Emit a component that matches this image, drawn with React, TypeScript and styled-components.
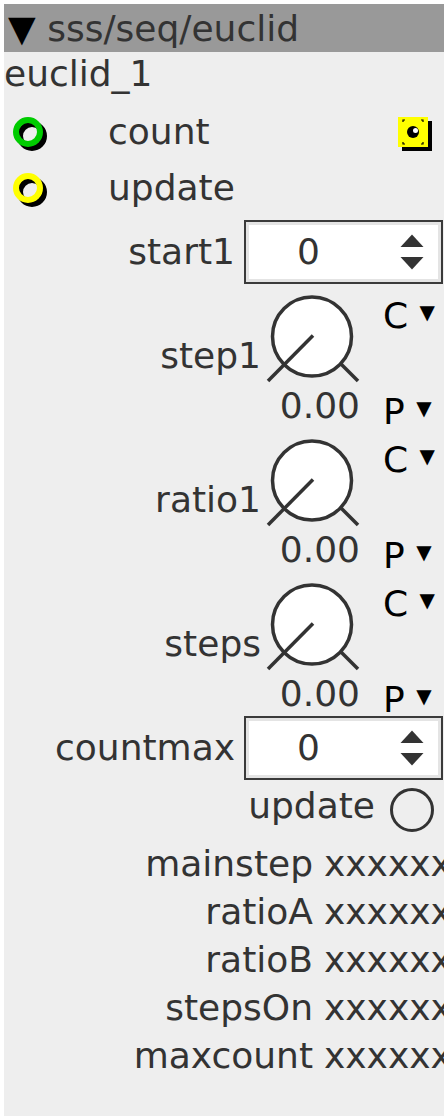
import React from "react";
import styled, { createGlobalStyle } from "styled-components";

const Global = createGlobalStyle`
  html, body { margin: 0; padding: 0; background: #ffffff; }
  body { font-family: "DejaVu Sans", "Noto Sans", sans-serif; }
`;

const Panel = styled.div`
  margin: 4px;
  width: 440px;
  height: 1112px;
  background: #eeeeee;
  overflow: hidden;
  font-family: "DejaVu Sans", "Noto Sans", sans-serif;
  font-size: 36px;
  color: #333333;
  display: flex;
  flex-direction: column;
  white-space: nowrap;
`;

const Header = styled.div`
  flex: 0 0 48px;
  background: #999999;
  display: flex;
  align-items: center;
  padding-left: 4px;
  line-height: 45px;
`;

const Caret = styled.span`
  color: #000000;
`;

const NameRow = styled.div`
  flex: 0 0 52px;
  line-height: 44px;
`;

const PortRow = styled.div`
  flex: 0 0 56px;
  display: flex;
  align-items: center;
`;

const PortLabel = styled.span`
  flex: 1;
  margin-left: 56px;
  line-height: 48px;
`;

const RingSvg = styled.svg`
  width: 40px;
  height: 40px;
  margin-left: 8px;
  flex-shrink: 0;
`;

const OutletSvg = styled.svg`
  width: 36px;
  height: 40px;
  margin-right: 10px;
  flex-shrink: 0;
`;

const FieldRow = styled.div<{ $top: number }>`
  flex: 0 0 ${(p) => 64 + p.$top}px;
  padding-top: ${(p) => p.$top}px;
  box-sizing: border-box;
  display: flex;
  align-items: center;
`;

const FieldLabel = styled.div`
  width: 231px;
  text-align: right;
  line-height: 48px;
  flex-shrink: 0;
`;

const SpinBox = styled.div`
  margin-left: 9px;
  width: 199px;
  height: 64px;
  box-sizing: border-box;
  border: 2px solid #3a3a3a;
  background: #ffffff;
  box-shadow: inset 0 0 0 3px #e4e4e4;
  display: flex;
  align-items: center;
  flex-shrink: 0;
`;

const SpinValue = styled.div`
  width: 125px;
  text-align: center;
  line-height: 48px;
`;

const SpinArrows = styled.svg`
  width: 24px;
  height: 36px;
  margin-left: 29px;
`;

const KnobBlock = styled.div`
  flex: 0 0 144px;
  display: grid;
  grid-template-columns: 258px 100px 1fr;
  grid-template-rows: 96px 48px;
`;

const KnobLabel = styled.div`
  grid-column: 1;
  grid-row: 1;
  align-self: end;
  text-align: right;
  line-height: 48px;
  padding-right: 1px;
`;

const KnobSvg = styled.svg`
  grid-column: 2;
  grid-row: 1;
  width: 100px;
  height: 96px;
  overflow: visible;
`;

const KnobValue = styled.div`
  grid-column: 2;
  grid-row: 2;
  text-align: right;
  line-height: 48px;
  padding-top: 2px;
  padding-right: 2px;
`;

const SideCol = styled.div`
  grid-column: 3;
  grid-row: 1 / span 2;
  display: flex;
  flex-direction: column;
  justify-content: space-between;
  padding-top: 8px;
  padding-left: 21px;
  color: #000000;
`;

const SideItem = styled.div`
  line-height: 40px;
  height: 40px;
`;

const SmallCaret = styled.span`
  font-size: 20px;
  vertical-align: 9px;
`;

const ToggleRow = styled.div`
  flex: 0 0 60px;
  display: flex;
  align-items: center;
  justify-content: flex-end;
  padding-right: 9px;
  gap: 14px;
`;

const ToggleLabel = styled.span`
  line-height: 48px;
  margin-bottom: 9px;
`;

const ToggleSvg = styled.svg`
  width: 46px;
  height: 46px;
  flex-shrink: 0;
`;

const ValueRow = styled.div`
  flex: 0 0 48px;
  display: grid;
  grid-template-columns: 309px 1fr;
  column-gap: 11px;
  line-height: 48px;
`;

const ValueLabel = styled.div`
  text-align: right;
`;

const ValueText = styled.div`
  overflow: visible;
`;

function Ring({ color }: { color: string }) {
  return (
    <RingSvg viewBox="0 0 40 40">
      <circle cx="20" cy="24" r="12" fill="none" stroke="#000" strokeWidth="6" />
      <circle cx="16" cy="20" r="12" fill="none" stroke={color} strokeWidth="6" />
    </RingSvg>
  );
}

function Outlet() {
  return (
    <OutletSvg viewBox="0 0 36 40">
      <rect x="4" y="9" width="30" height="30" fill="#000" />
      <rect x="0" y="5" width="30" height="30" fill="#ffff00" />
      <g stroke="#000" strokeWidth="1.2" fill="none">
        <path d="M5 10 V8 H7" />
        <path d="M23 8 H25 V10" />
        <path d="M5 30 V32 H7" />
        <path d="M23 32 H25 V30" />
      </g>
      <circle cx="15" cy="20" r="6" fill="#000" />
      <circle cx="17.5" cy="18.5" r="2.5" fill="#fff" />
    </OutletSvg>
  );
}

function Spin({ label, value, top }: { label: string; value: string; top: number }) {
  return (
    <FieldRow $top={top}>
      <FieldLabel>{label}</FieldLabel>
      <SpinBox>
        <SpinValue>{value}</SpinValue>
        <SpinArrows viewBox="0 0 24 36">
          <polygon points="0.5,13 12,0.5 23.5,13" fill="#333" />
          <polygon points="0.5,23 23.5,23 12,35.5" fill="#333" />
        </SpinArrows>
      </SpinBox>
    </FieldRow>
  );
}

function Knob({ label }: { label: string }) {
  return (
    <KnobBlock>
      <KnobLabel>{label}</KnobLabel>
      <KnobSvg viewBox="0 0 100 96">
        <circle cx="50" cy="52.5" r="39.5" fill="#fff" stroke="#333" strokeWidth="3.5" />
        <line x1="51" y1="51.5" x2="6" y2="97" stroke="#333" strokeWidth="3.5" />
        <line x1="78" y1="79" x2="96" y2="97" stroke="#333" strokeWidth="3.5" />
      </KnobSvg>
      <KnobValue>0.00</KnobValue>
      <SideCol>
        <SideItem>
          C <SmallCaret>▼</SmallCaret>
        </SideItem>
        <SideItem>
          P <SmallCaret>▼</SmallCaret>
        </SideItem>
      </SideCol>
    </KnobBlock>
  );
}

const values = ["mainstep", "ratioA", "ratioB", "stepsOn", "maxcount"];

export default function App() {
  return (
    <>
      <Global />
      <Panel>
        <Header>
          <Caret>▼</Caret>&nbsp;sss/seq/euclid
        </Header>
        <NameRow>euclid_1</NameRow>
        <PortRow>
          <Ring color="#00cc00" />
          <PortLabel>count</PortLabel>
          <Outlet />
        </PortRow>
        <PortRow>
          <Ring color="#ffff00" />
          <PortLabel>update</PortLabel>
        </PortRow>
        <Spin label="start1" value="0" top={4} />
        <Knob label="step1" />
        <Knob label="ratio1" />
        <Knob label="steps" />
        <Spin label="countmax" value="0" top={0} />
        <ToggleRow>
          <ToggleLabel>update</ToggleLabel>
          <ToggleSvg viewBox="0 0 46 46">
            <circle cx="23" cy="23" r="20.5" fill="none" stroke="#333" strokeWidth="3" />
          </ToggleSvg>
        </ToggleRow>
        {values.map((v) => (
          <ValueRow key={v}>
            <ValueLabel>{v}</ValueLabel>
            <ValueText>xxxxxx</ValueText>
          </ValueRow>
        ))}
      </Panel>
    </>
  );
}
